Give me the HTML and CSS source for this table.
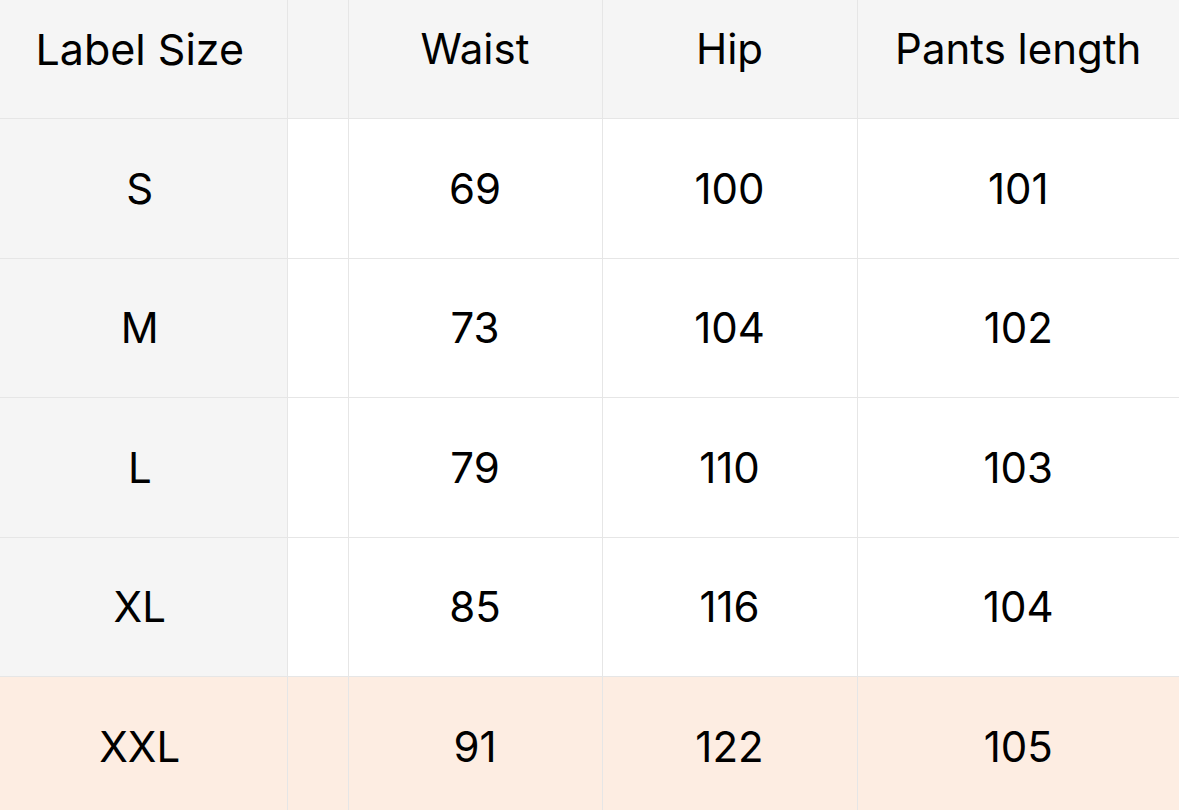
FILE: index.html
```html
<!DOCTYPE html>
<html>
<head>
<meta charset="utf-8">
<link rel="stylesheet" href="styles.css">
</head>
<body>
<table class="size-table">
  <colgroup>
    <col class="c-label"><col class="c-gap"><col class="c-waist"><col class="c-hip"><col class="c-len">
  </colgroup>
  <thead>
    <tr class="head">
      <th class="label">Label Size</th><th></th><th>Waist</th><th>Hip</th><th>Pants length</th>
    </tr>
  </thead>
  <tbody>
    <tr><td class="label">S</td><td></td><td>69</td><td>100</td><td>101</td></tr>
    <tr><td class="label">M</td><td></td><td>73</td><td>104</td><td>102</td></tr>
    <tr><td class="label">L</td><td></td><td>79</td><td>110</td><td>103</td></tr>
    <tr><td class="label">XL</td><td></td><td>85</td><td>116</td><td>104</td></tr>
    <tr class="hl"><td class="label">XXL</td><td></td><td>91</td><td>122</td><td>105</td></tr>
  </tbody>
</table>
</body>
</html>
```
FILE: styles.css
```css
html, body {
  margin: 0;
  padding: 0;
  background: #fff;
}
.size-table {
  width: 1179px;
  table-layout: fixed;
  border-collapse: collapse;
  font-family: Inter, "Liberation Sans", sans-serif;
  font-size: 42px;
  color: #000;
}
.c-label { width: 287px; }
.c-gap { width: 61px; }
.c-waist { width: 254px; }
.c-hip { width: 255px; }
.c-len { width: 322px; }
.size-table th, .size-table td {
  border: 1px solid #e6e6e6;
  text-align: center;
  vertical-align: middle;
  padding: 0;
  font-weight: 400;
}
.size-table tr:first-child th, .size-table tr:first-child td { border-top: none; }
.size-table th:first-child, .size-table td:first-child { border-left: none; }
.size-table th:last-child, .size-table td:last-child { border-right: none; }
.head th {
  height: 97px;
  background: #f5f5f5;
  padding-bottom: 21px;
}
.head th.label { font-size: 43px; }
tbody td { height: 138.5px; }
.size-table .label { background: #f5f5f5; padding-right: 7px; }
.size-table tr.hl td { background: #fdede2; }
```
